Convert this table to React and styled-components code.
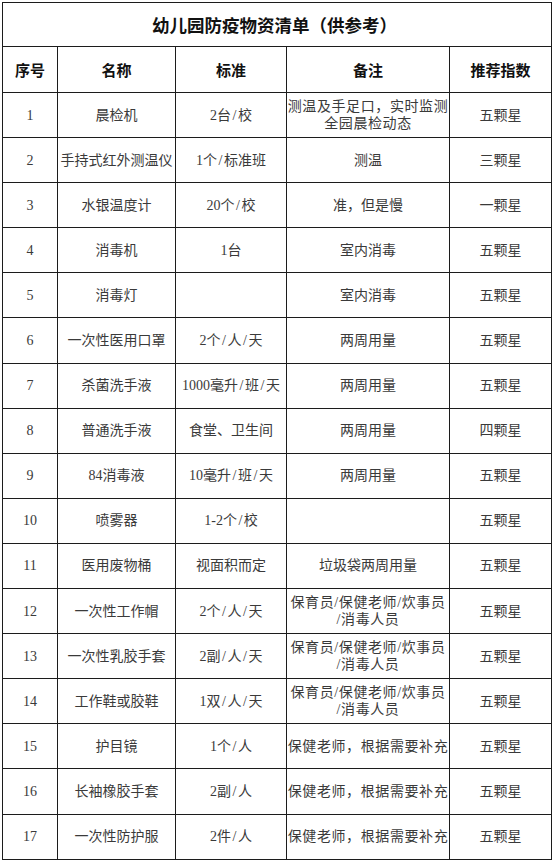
import styled, { createGlobalStyle } from "styled-components";

const GlobalStyle = createGlobalStyle`
  html, body {
    margin: 0;
    padding: 0;
    background: #ffffff;
  }
  body {
    font-family: "Liberation Serif", "Noto Sans CJK SC", serif;
  }
`;

const rows = [
  ["1", "晨检机", "2台/校", ["测温及手足口，实时监测", "全园晨检动态"], "五颗星"],
  ["2", "手持式红外测温仪", "1个/标准班", ["测温"], "三颗星"],
  ["3", "水银温度计", "20个/校", ["准，但是慢"], "一颗星"],
  ["4", "消毒机", "1台", ["室内消毒"], "五颗星"],
  ["5", "消毒灯", "", ["室内消毒"], "五颗星"],
  ["6", "一次性医用口罩", "2个/人/天", ["两周用量"], "五颗星"],
  ["7", "杀菌洗手液", "1000毫升/班/天", ["两周用量"], "五颗星"],
  ["8", "普通洗手液", "食堂、卫生间", ["两周用量"], "四颗星"],
  ["9", "84消毒液", "10毫升/班/天", ["两周用量"], "五颗星"],
  ["10", "喷雾器", "1-2个/校", [], "五颗星"],
  ["11", "医用废物桶", "视面积而定", ["垃圾袋两周用量"], "五颗星"],
  ["12", "一次性工作帽", "2个/人/天", ["保育员/保健老师/炊事员", "/消毒人员"], "五颗星"],
  ["13", "一次性乳胶手套", "2副/人/天", ["保育员/保健老师/炊事员", "/消毒人员"], "五颗星"],
  ["14", "工作鞋或胶鞋", "1双/人/天", ["保育员/保健老师/炊事员", "/消毒人员"], "五颗星"],
  ["15", "护目镜", "1个/人", ["保健老师，根据需要补充"], "五颗星"],
  ["16", "长袖橡胶手套", "2副/人", ["保健老师，根据需要补充"], "五颗星"],
  ["17", "一次性防护服", "2件/人", ["保健老师，根据需要补充"], "五颗星"],
];

const headers = ["序号", "名称", "标准", "备注", "推荐指数"];

const Page = styled.div`
  padding: 2px 0 0 2px;
`;

const Sheet = styled.div`
  display: grid;
  grid-template-columns: 55px 118px 111px 163px 102px;
  grid-template-rows: 44px 46px;
  grid-auto-rows: 45.1px;
  width: 550px;
  border-top: 1px solid #1c1c1c;
  border-left: 1px solid #1c1c1c;
  box-sizing: border-box;
`;

const Cell = styled.div`
  display: flex;
  flex-direction: column;
  align-items: center;
  justify-content: center;
  border-right: 1px solid #1c1c1c;
  border-bottom: 1px solid #1c1c1c;
  box-sizing: border-box;
  padding: 0 1px;
  overflow: hidden;
  white-space: nowrap;
  font-size: 14px;
  line-height: 17px;
  color: #3a3a3a;
  text-align: center;
`;

const TitleCell = styled(Cell)`
  grid-column: 1 / -1;
  font-family: "Noto Sans CJK SC", sans-serif;
  font-size: 17.5px;
  font-weight: 700;
  color: #111;
  padding-right: 6px;
`;

const HeadCell = styled(Cell)`
  font-family: "Noto Sans CJK SC", sans-serif;
  font-size: 15px;
  font-weight: 700;
  color: #111;
`;

const Line = styled.span`
  display: block;
  letter-spacing: ${({ $spread }) => ($spread ? "0.6px" : "0")};
`;

const Slash = styled.span`
  margin: 0 1.5px;
`;

// standard column: slashes get a bit of air like the source sheet
const spaced = (text) =>
  text.split("/").flatMap((part, i) =>
    i === 0 ? [part] : [<Slash key={i}>/</Slash>, part]
  );

export default function App() {
  return (
    <Page>
      <GlobalStyle />
      <Sheet>
        <TitleCell>幼儿园防疫物资清单（供参考）</TitleCell>
        {headers.map((h) => (
          <HeadCell key={h}>{h}</HeadCell>
        ))}
        {rows.map(([no, name, std, note, stars]) => (
          <>
            <Cell key={no + "a"}>{no}</Cell>
            <Cell key={no + "b"}>{name}</Cell>
            <Cell key={no + "c"}>
              <Line>{spaced(std)}</Line>
            </Cell>
            <Cell key={no + "d"}>
              {note.map((l) => (
                <Line key={l} $spread={note.length > 1 || l.length > 9}>
                  {l}
                </Line>
              ))}
            </Cell>
            <Cell key={no + "e"}>{stars}</Cell>
          </>
        ))}
      </Sheet>
    </Page>
  );
}
